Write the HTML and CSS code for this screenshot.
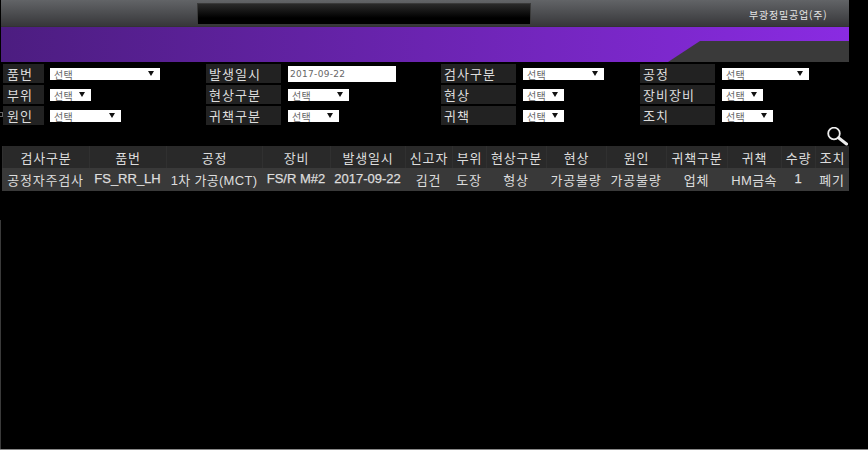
FILE: index.html
```html
<!DOCTYPE html>
<html lang="ko">
<head>
    <meta charset="UTF-8">
    <title>부광정밀공업(주)</title>
    <link rel="stylesheet" href="styles.css">
</head>
<body>
    <div class="page">
        <!-- top bar -->
        <div class="top-bar">
            <div class="top-title"></div>
            <div class="company">부광정밀공업(주)</div>
        </div>

        <!-- purple band -->
        <div class="purple-bar">
            <svg class="corner" viewBox="0 0 181 21" preserveAspectRatio="none">
                <polygon points="0,21 32,0 181,0 181,21" fill="#3a3a3a"/>
            </svg>
        </div>

        <!-- search form -->
        <div class="search-form">
            <div class="form-col col-1">
                <div class="field"><span class="label">품번</span><span class="select w-110">선택<i class="arrow"></i></span></div>
                <div class="field"><span class="label">부위</span><span class="select w-41">선택<i class="arrow"></i></span></div>
                <div class="field"><i class="stray"></i><span class="label">원인</span><span class="select w-71">선택<i class="arrow"></i></span></div>
            </div>
            <div class="form-col col-2">
                <div class="field"><span class="label">발생일시</span><input class="date-input" type="text" value="2017-09-22"></div>
                <div class="field"><span class="label">현상구분</span><span class="select w-61">선택<i class="arrow"></i></span></div>
                <div class="field"><span class="label">귀책구분</span><span class="select w-51">선택<i class="arrow"></i></span></div>
            </div>
            <div class="form-col col-3">
                <div class="field"><span class="label">검사구분</span><span class="select w-81">선택<i class="arrow"></i></span></div>
                <div class="field"><span class="label">현상</span><span class="select w-41">선택<i class="arrow"></i></span></div>
                <div class="field"><span class="label">귀책</span><span class="select w-41">선택<i class="arrow"></i></span></div>
            </div>
            <div class="form-col col-4">
                <div class="field"><span class="label">공정</span><span class="select w-87">선택<i class="arrow"></i></span></div>
                <div class="field"><span class="label">장비장비</span><span class="select w-41">선택<i class="arrow"></i></span></div>
                <div class="field"><span class="label">조치</span><span class="select w-51">선택<i class="arrow"></i></span></div>
            </div>
        </div>

        <div class="search-row">
            <svg class="search-icon" viewBox="0 0 22 19">
                <circle cx="7" cy="6.5" r="5.8" fill="none" stroke="#eeeeee" stroke-width="1.8"/>
                <line x1="11.5" y1="10.8" x2="19.5" y2="17" stroke="#eeeeee" stroke-width="3" stroke-linecap="round"/>
            </svg>
        </div>

        <!-- result list -->
        <table class="result-table">
            <colgroup>
                <col class="c1"><col class="c2"><col class="c3"><col class="c4"><col class="c5"><col class="c6"><col class="c7">
                <col class="c8"><col class="c9"><col class="c10"><col class="c11"><col class="c12"><col class="c13"><col class="c14">
            </colgroup>
            <thead>
                <tr>
                    <th>검사구분</th><th>품번</th><th>공정</th><th>장비</th><th>발생일시</th><th>신고자</th><th>부위</th>
                    <th>현상구분</th><th>현상</th><th>원인</th><th>귀책구분</th><th>귀책</th><th>수량</th><th>조치</th>
                </tr>
            </thead>
            <tbody>
                <tr>
                    <td>공정자주검사</td><td class="latin">FS_RR_LH</td><td class="mixed">1차 가공(MCT)</td><td class="latin">FS/R M#2</td><td class="latin">2017-09-22</td><td>김건</td><td>도장</td>
                    <td>형상</td><td>가공불량</td><td>가공불량</td><td>업체</td><td class="mixed">HM금속</td><td class="latin">1</td><td>폐기</td>
                </tr>
            </tbody>
        </table>

        <div class="left-rule"></div>
    </div>
</body>
</html>
```

FILE: styles.css
```css
* {
    margin: 0;
    padding: 0;
    box-sizing: border-box;
}

html, body {
    height: 100%;
    background: #000;
    overflow: hidden;
}

body {
    font-family: "Noto Sans CJK KR", "Liberation Sans", sans-serif;
    color: #ddd;
}

.page {
    display: flex;
    flex-direction: column;
    height: 450px;
    border-bottom: 1px solid #888;
}

/* top bar */
.top-bar {
    flex: none;
    display: flex;
    width: 848px;
    height: 27px;
    margin-left: 1px;
    padding-top: 3px;
    background: linear-gradient(#626467, #37373a);
    border-bottom: 1px solid #333;
}

.top-title {
    width: 334px;
    height: 22px;
    margin-left: 196px;
    background: linear-gradient(#2a2a2a, #000 70%);
    border: 1px solid #3a3a3a;
}

.company {
    margin-left: 218px;
    font-size: 10px;
    line-height: 23px;
    letter-spacing: 0.8px;
    color: #e4e4e4;
    white-space: nowrap;
}

/* purple band */
.purple-bar {
    flex: none;
    position: relative;
    width: 848px;
    height: 35px;
    margin-left: 1px;
    background: linear-gradient(90deg, #4c1d80, #8a2be2);
}

.corner {
    position: absolute;
    right: 0;
    bottom: 0;
    width: 181px;
    height: 21px;
}

/* form */
.search-form {
    flex: none;
    display: flex;
    height: 65px;
    padding-top: 2px;
    padding-left: 3px;
}

.form-col {
    display: flex;
    flex-direction: column;
    gap: 2px;
}

.col-1 { width: 203px; }
.col-2 { width: 235px; }
.col-3 { width: 199px; }

.field {
    position: relative;
    display: flex;
    align-items: center;
    height: 19px;
}

/* little clipped mark left of the third row */
.stray {
    position: absolute;
    left: -3px;
    top: 6px;
    width: 3px;
    height: 5px;
    border: 1px solid #666;
    border-left: none;
}

.label {
    height: 19px;
    padding-left: 3px;
    background: #222;
    font-size: 13px;
    line-height: 19px;
    letter-spacing: 1px;
    color: #ddd;
    white-space: nowrap;
}

.col-1 .label { width: 41px; margin-right: 6px; padding-left: 4px; }
.col-2 .label, .col-3 .label, .col-4 .label { width: 75px; margin-right: 7px; }

.select {
    position: relative;
    display: block;
    height: 12px;
    padding-left: 4px;
    background: #fff;
    color: #666;
    font-size: 10px;
    line-height: 13px;
    letter-spacing: 0.4px;
}

.arrow {
    position: absolute;
    right: 6px;
    top: 3px;
    border-left: 3px solid transparent;
    border-right: 3px solid transparent;
    border-top: 5px solid #111;
}

.w-41 { width: 41px; }
.w-51 { width: 51px; }
.w-61 { width: 61px; }
.w-71 { width: 71px; }
.w-81 { width: 81px; }
.w-87 { width: 87px; }
.w-110 { width: 110px; }

.date-input {
    width: 108px;
    height: 16px;
    border: none;
    outline: none;
    background: #fff;
    padding-left: 2px;
    color: #666;
    font-family: "DejaVu Sans", sans-serif;
    font-size: 9px;
    letter-spacing: 0.3px;
}

.search-row {
    flex: none;
    display: flex;
    justify-content: flex-end;
    height: 19px;
    padding-right: 19px;
}

.search-icon {
    width: 22px;
    height: 19px;
}

/* table */
.result-table {
    flex: none;
    width: 847px;
    margin-left: 2px;
    table-layout: fixed;
    border-collapse: separate;
    border-spacing: 0;
}

.c1 { width: 87px; }
.c2 { width: 77px; }
.c3 { width: 96px; }
.c4 { width: 68px; }
.c5 { width: 75px; }
.c6 { width: 47px; }
.c7 { width: 34px; }
.c8 { width: 60px; }
.c9 { width: 60px; }
.c10 { width: 60px; }
.c11 { width: 61px; }
.c12 { width: 54px; }
.c13 { width: 34px; }
.c14 { width: 34px; }

.result-table th,
.result-table td {
    text-align: center;
    white-space: nowrap;
    overflow: hidden;
    font-size: 13px;
    font-weight: normal;
    letter-spacing: 0.8px;
    color: #ddd;
    font-family: "Liberation Sans", "Noto Sans CJK KR", sans-serif;
}

.result-table th {
    height: 22px;
    background: #292929;
    border-left: 1px solid #303030;
}

.result-table td {
    height: 23px;
    background: #393939;
}

.result-table td.latin {
    padding-bottom: 3px;
    letter-spacing: 0;
    -webkit-text-stroke: 0.25px #ddd;
}

.result-table td.mixed {
    letter-spacing: 0.3px;
}

/* faint rule down the left edge under the table */
.left-rule {
    flex: 1;
    margin-top: 29px;
    border-left: 1px solid #3a3a3a;
}
```
